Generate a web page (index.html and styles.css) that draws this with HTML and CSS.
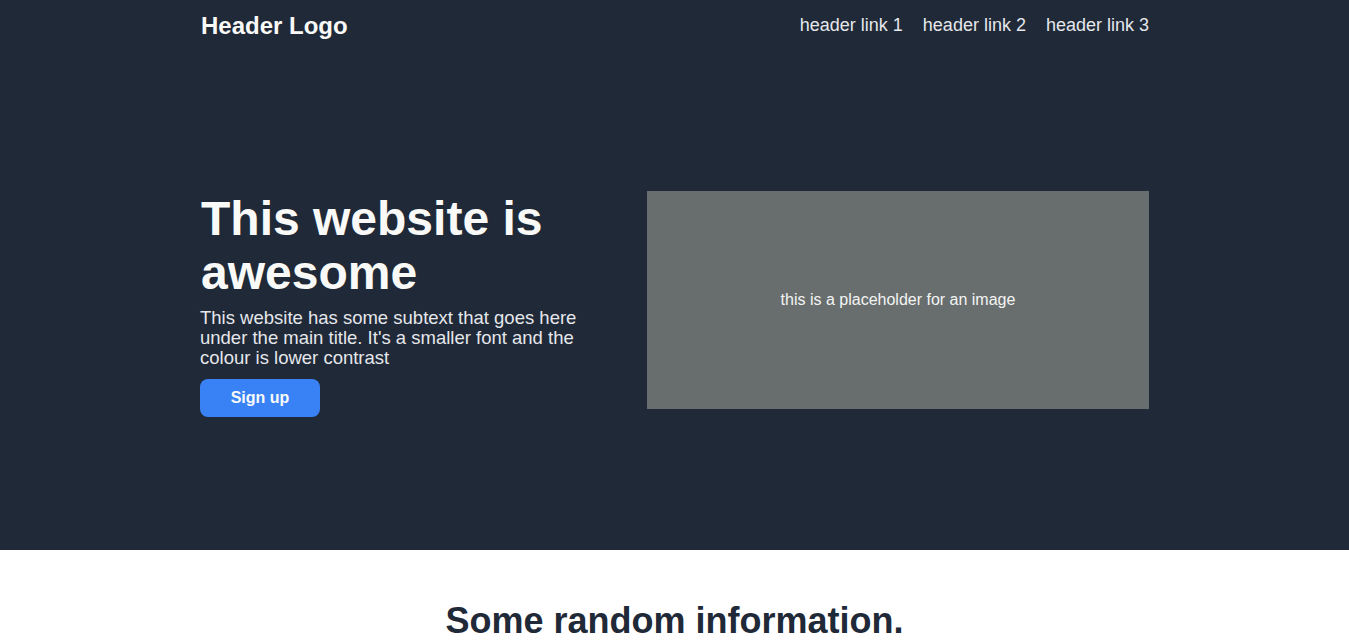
FILE: index.html
```html
<!DOCTYPE html>
<html lang="en">
<head>
<meta charset="utf-8">
<title>Landing Page</title>
<link rel="stylesheet" href="styles.css">
</head>
<body>
  <div class="top">
    <header class="header container">
      <div class="logo">Header Logo</div>
      <nav class="nav">
        <a href="#">header link 1</a>
        <a href="#">header link 2</a>
        <a href="#">header link 3</a>
      </nav>
    </header>
    <section class="hero container">
      <div class="hero-text">
        <h1>This website is awesome</h1>
        <p>This website has some subtext that goes here under the main title. It's a smaller font and the colour is lower contrast</p>
        <button class="btn">Sign up</button>
      </div>
      <div class="placeholder">this is a placeholder for an image</div>
    </section>
  </div>
  <section class="info">
    <h2>Some random information.</h2>
  </section>
</body>
</html>
```
FILE: styles.css
```css
* { box-sizing: border-box; }
body {
  margin: 0;
  font-family: "Liberation Sans", Arial, sans-serif;
  background: #ffffff;
}
.container {
  width: 949px;
  margin: 0 auto;
}
.top {
  background: #1f2937;
}
.header {
  height: 50px;
  display: flex;
  justify-content: space-between;
  align-items: center;
}
.logo {
  font-size: 24px;
  font-weight: bold;
  color: #f9faf8;
  padding-top: 2px;
  padding-left: 1px;
}
.nav {
  display: flex;
  gap: 20px;
}
.nav a {
  color: #e5e7eb;
  font-size: 18px;
  text-decoration: none;
}
.hero {
  height: 500px;
  display: flex;
  justify-content: space-between;
  align-items: center;
}
.hero-text {
  width: 400px;
  padding-top: 8px;
}
.hero-text h1 {
  margin: 0 0 8px 1px;
  font-size: 48px;
  font-weight: bold;
  color: #f9faf8;
  line-height: 54px;
}
.hero-text p {
  margin: 0;
  font-size: 18.5px;
  color: #e5e7eb;
  line-height: 20px;
}
.btn {
  margin-top: 11px;
  width: 120px;
  height: 38px;
  background: #3882f6;
  color: #f9faf8;
  border: none;
  border-radius: 8px;
  font-family: inherit;
  font-size: 16px;
  font-weight: bold;
}
.placeholder {
  width: 502px;
  height: 218px;
  background: #686e6d;
  color: #f3f4f4;
  font-size: 16px;
  display: flex;
  align-items: center;
  justify-content: center;
}
.info {
  padding-top: 50px;
  text-align: center;
}
.info h2 {
  margin: 0;
  font-size: 36px;
  font-weight: bold;
  color: #1f2937;
}
```
